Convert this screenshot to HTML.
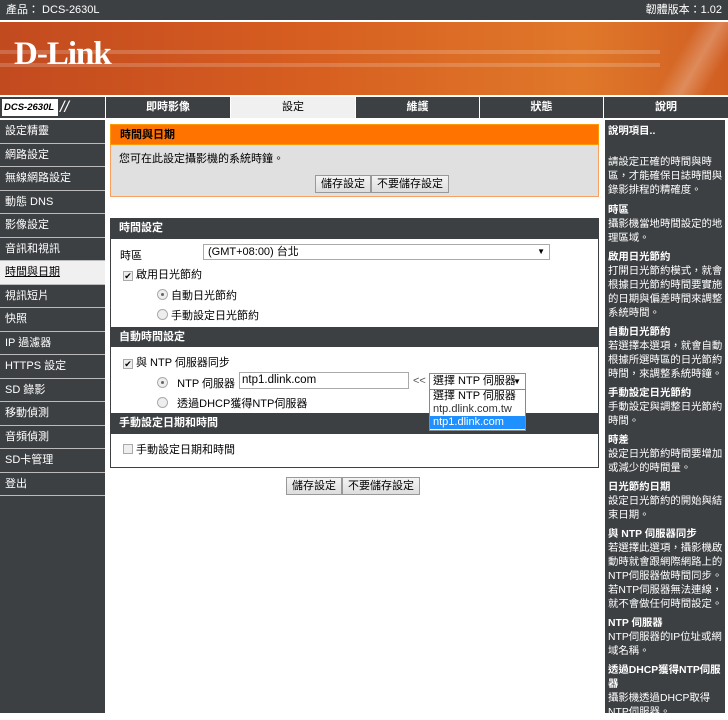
<!DOCTYPE html>
<html><head><meta charset="utf-8"><style>
*{margin:0;padding:0;box-sizing:border-box}
body{width:728px;height:713px;overflow:hidden;background:#fff;font-family:"Liberation Sans","Noto Sans CJK TC",sans-serif;font-size:11px;color:#000;position:relative}
.abs{position:absolute}
#top{left:0;top:0;width:728px;height:20px;background:#3d4043;color:#fff;font-size:11px;line-height:20px;padding:0 6px}
#banner{left:0;top:22px;width:728px;height:73px;background:linear-gradient(90deg,#c24a1f 0%,#d65d20 40%,#e0782a 80%,#d05e22 100%);overflow:hidden}
.stripe{position:absolute;left:0;width:660px;height:4px;background:rgba(255,255,255,.18)}
#logo{position:absolute;left:14px;top:14px;font-family:"Liberation Serif",serif;font-weight:bold;font-size:33px;color:#fff;letter-spacing:-1px}
.tab{position:absolute;top:97px;height:21px;background:#3d4043;color:#fff;font-weight:bold;text-align:center;line-height:21px;font-size:11px}
#nav{left:0;top:120px;width:105px;height:593px;background:#3d4043}
.ni{height:23.5px;border-bottom:1px solid #bbb;color:#fff;font-size:11px;line-height:22px;padding-left:5px}
.ni.sel{background:#f0f0f0;color:#000;text-decoration:underline}
#help{left:605px;top:120px;width:120px;height:593px;background:#3d4043;color:#fff;padding:5px 2px 5px 3px;font-size:10.4px;line-height:14px}
#help b{display:block;margin-top:5px}
.hdr{position:absolute;left:110px;width:489px;height:21px;background:#3d4043;color:#fff;font-weight:bold;line-height:21px;padding-left:9px}
.box{position:absolute;left:110px;width:489px;border:1px solid #3d4043;background:#fff}
.btn{display:inline-block;border:1px solid #999;background:linear-gradient(#f4f4f4,#ddd);padding:0 5px;height:18px;line-height:16px;font-size:11px}
.cb{display:inline-block;width:10px;height:10px;border:1px solid #aaa;background:#eee;vertical-align:-1px;margin-right:3px;font-size:9px;line-height:8px;text-align:center}
.rd{display:inline-block;width:11px;height:11px;border:1px solid #aaa;border-radius:50%;background:#eee;vertical-align:-1px;position:relative}
.rd.on:after{content:"";position:absolute;left:3px;top:3px;width:3px;height:3px;border-radius:50%;background:#666}
</style></head><body>
<div id="top" class="abs">產品： DCS-2630L<span style="float:right">韌體版本：1.02</span></div>
<div id="banner" class="abs">
<div class="stripe" style="top:28px"></div><div class="stripe" style="top:41px"></div>
<div style="position:absolute;right:0;top:0;width:80px;height:73px;background:linear-gradient(120deg,transparent 40%,rgba(255,255,255,.25) 60%,transparent 80%)"></div>
<div id="logo">D-Link</div></div>
<div class="tab" style="left:0;width:105px;background:#3d4043;text-align:left;white-space:nowrap;overflow:hidden"><span style="display:inline-block;background:#fff;color:#000;font-style:italic;font-size:9.5px;height:17px;line-height:17px;margin:2px;padding:0 2px;width:56px;vertical-align:top">DCS-2630L</span><span style="font-style:italic;font-weight:normal;font-size:16px;color:#fff">//</span></div>
<div class="tab" style="left:106px;width:124px">即時影像</div>
<div class="tab" style="left:231px;width:124px;background:#f0f0f0;color:#000;font-weight:normal">設定</div>
<div class="tab" style="left:356px;width:123px">維護</div>
<div class="tab" style="left:480px;width:123px">狀態</div>
<div class="tab" style="left:604px;width:124px">說明</div>
<div id="nav" class="abs">
<div class="ni">設定精靈</div><div class="ni">網路設定</div><div class="ni">無線網路設定</div><div class="ni">動態 DNS</div><div class="ni">影像設定</div><div class="ni">音訊和視訊</div><div class="ni sel">時間與日期</div><div class="ni">視訊短片</div><div class="ni">快照</div><div class="ni">IP 過濾器</div><div class="ni">HTTPS 設定</div><div class="ni">SD 錄影</div><div class="ni">移動偵測</div><div class="ni">音頻偵測</div><div class="ni">SD卡管理</div><div class="ni">登出</div>
</div>
<div class="hdr" style="top:124px;background:#ff7300;color:#000;border:1px solid #f90">時間與日期</div>
<div class="abs" style="left:110px;top:145px;width:489px;height:52px;background:#e0e0e0;border:1px solid #f8a060;border-top:none;padding:5px 8px">您可在此設定攝影機的系統時鐘。
<div style="text-align:center;margin-top:9px;padding-left:55px"><span class="btn">儲存設定</span><span class="btn">不要儲存設定</span></div></div>
<div class="hdr" style="top:218px">時間設定</div>
<div class="box" style="top:239px;height:89px;border-top:none">
<div class="abs" style="left:9px;top:8px">時區</div>
<div class="abs" style="left:92px;top:5px;width:347px;height:16px;border:1px solid #aaa;line-height:14px;padding-left:4px">(GMT+08:00) 台北<span style="position:absolute;right:4px;font-size:8px">▼</span></div>
<div class="abs" style="left:12px;top:27px"><span class="cb">✔</span>啟用日光節約</div>
<div class="abs" style="left:46px;top:48px"><span class="rd on"></span> 自動日光節約</div>
<div class="abs" style="left:46px;top:68px"><span class="rd"></span> 手動設定日光節約</div>
</div>
<div class="hdr" style="top:327px">自動時間設定</div>
<div class="box" style="top:347px;height:67px;border-top:none">
<div class="abs" style="left:12px;top:7px"><span class="cb">✔</span>與 NTP 伺服器同步</div>
<div class="abs" style="left:46px;top:28px"><span class="rd on"></span> &nbsp; NTP 伺服器</div>
<div class="abs" style="left:128px;top:25px;width:170px;height:17px;border:1px solid #aaa;line-height:15px;padding-left:2px;font-size:11.5px">ntp1.dlink.com</div>
<div class="abs" style="left:302px;top:28px;color:#555">&lt;&lt;</div>
<div class="abs" style="left:46px;top:48px"><span class="rd"></span> &nbsp; 透過DHCP獲得NTP伺服器</div>
</div>
<div class="hdr" style="top:413px">手動設定日期和時間</div>
<div class="box" style="top:434px;height:34px;border-top:none">
<div class="abs" style="left:12px;top:7px"><span class="cb"></span>手動設定日期和時間</div></div>
<div class="abs" style="left:429px;top:373px;width:97px;height:17px;border:1px solid #5b9bd5;background:#fff;line-height:15px;padding-left:3px;font-size:11px;white-space:nowrap">選擇 NTP 伺服器<span style="position:absolute;right:4px;font-size:8px">▼</span></div>
<div class="abs" style="left:429px;top:389px;width:97px;height:42px;border:1px solid #888;background:#fff;font-size:11px;line-height:13px;white-space:nowrap">
<div style="padding-left:3px">選擇 NTP 伺服器</div><div style="padding-left:3px;color:#333">ntp.dlink.com.tw</div><div style="padding-left:3px;background:#1e90ff;color:#fff">ntp1.dlink.com</div></div>
<div class="abs" style="left:286px;top:477px"><span class="btn">儲存設定</span><span class="btn">不要儲存設定</span></div>
<div id="help" class="abs"><b style="margin-top:0">說明項目..</b><div style="margin-top:17px;margin-bottom:6px">請設定正確的時間與時區，才能確保日誌時間與錄影排程的精確度。</div>
<b>時區</b>攝影機當地時間設定的地理區域。
<b>啟用日光節約</b>打開日光節約模式，就會根據日光節約時間要實施的日期與偏差時間來調整系統時間。
<b>自動日光節約</b>若選擇本選項，就會自動根據所選時區的日光節約時間，來調整系統時鐘。
<b>手動設定日光節約</b>手動設定與調整日光節約時間。
<b>時差</b>設定日光節約時間要增加或減少的時間量。
<b>日光節約日期</b>設定日光節約的開始與結束日期。
<b>與 NTP 伺服器同步</b>若選擇此選項，攝影機啟動時就會跟網際網路上的NTP伺服器做時間同步。若NTP伺服器無法連線，就不會做任何時間設定。
<b>NTP 伺服器</b>NTP伺服器的IP位址或網域名稱。
<b>透過DHCP獲得NTP伺服器</b>攝影機透過DHCP取得NTP伺服器。</div>
</body></html>
